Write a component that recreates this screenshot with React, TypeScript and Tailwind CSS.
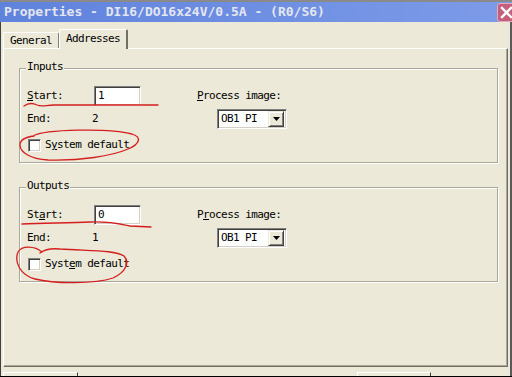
import React from "react";

const txt = "font-['DejaVu_Sans_Mono',monospace] text-[11px] tracking-[-0.6px] leading-[12px] text-black";

function Sunken({ className = "", children }: { className?: string; children?: React.ReactNode }) {
  return (
    <div
      className={
        "bg-white border border-t-[#808080] border-l-[#808080] border-b-white border-r-white shadow-[inset_1px_1px_0_#404040,inset_-1px_-1px_0_#d4d0c8] " +
        className
      }
    >
      {children}
    </div>
  );
}

function Combo() {
  return (
    <Sunken className="w-[70px] h-[20px] flex items-center pl-[3px] pr-[2px]">
      <span className={txt + " flex-1"}>OB1 PI</span>
      <div className="w-[16px] h-[16px] bg-[#ece9d8] border border-t-[#ece9d8] border-l-[#ece9d8] border-b-[#404040] border-r-[#404040] shadow-[inset_1px_1px_0_#fff,inset_-1px_-1px_0_#808080] flex items-center justify-center">
        <svg width="7" height="4" viewBox="0 0 7 4">
          <path d="M0 0 H7 L3.5 4 Z" fill="#000" />
        </svg>
      </div>
    </Sunken>
  );
}

function Group({
  title,
  value,
  end,
  startMn,
  procMn,
  sys,
}: {
  title: string;
  value: string;
  end: string;
  startMn: React.ReactNode;
  procMn: React.ReactNode;
  sys: React.ReactNode;
}) {
  return (
    <div className="relative w-[479px] h-[95px] border border-[#aca899] shadow-[inset_1px_1px_0_#fff,1px_1px_0_#fff] pt-[17px] pl-[7px]">
      <span className={txt + " absolute top-[-8px] left-[6px] px-[1px] bg-[#ece9d8]"}>{title}</span>
      <div className="grid grid-cols-[67px_103px_1fr] grid-rows-[20px_20px] gap-y-[3px] items-center">
        <span className={txt}>{startMn}</span>
        <Sunken className="w-[47px] h-[20px] flex items-center pl-[3px]">
          <span className={txt}>{value}</span>
        </Sunken>
        <span className={txt}>{procMn}</span>
        <span className={txt}>End:</span>
        <span className={txt + " -ml-[2px]"}>{end}</span>
        <div className="pl-[20px]">
          <Combo />
        </div>
      </div>
      <div className="mt-[8px] h-[16px] flex items-center pl-[1px] gap-[4px]">
        <Sunken className="w-[13px] h-[13px]" />
        <span className={txt}>{sys}</span>
      </div>
    </div>
  );
}

export default function App() {
  return (
    <div className="relative w-[512px] h-[377px] overflow-hidden bg-[#ece9d8] border-b border-black">
      {/* title bar */}
      <div className="h-[22px] border-t-2 border-[#8a8a8a] bg-gradient-to-r from-[#5f82dc] to-[#7d9be8] flex items-center overflow-hidden">
        <span className="pl-[4px] font-['DejaVu_Sans_Mono',monospace] font-bold text-[13px] leading-[16px] text-[#e4e6f0] whitespace-nowrap">
          Properties - DI16/DO16x24V/0.5A - (R0/S6)
        </span>
        <div className="ml-auto -mr-[6px] w-[21px] h-[19px] rounded-[3px] bg-[#c4607c] border border-[#e3a9b8] flex items-center pl-[2px]">
          <svg width="13" height="13" viewBox="0 0 13 13">
            <path d="M2 2 L11 11 M11 2 L2 11" stroke="#fff" strokeWidth="2.4" strokeLinecap="square" />
          </svg>
        </div>
      </div>

      {/* body */}
      <div className="h-[354px] border-l border-l-[#404040] border-r-2 border-r-[#5a5a5a] pl-[2px] pt-[7px]">
        {/* tabs */}
        <div className="flex items-end h-[19px]">
          <div className="w-[56px] h-[16px] border-t border-l border-white border-r border-r-[#808080] rounded-t-[2px] flex items-center justify-center">
            <span className={txt}>General</span>
          </div>
          <div className="relative z-10 w-[69px] h-[20px] -mb-[1px] bg-[#ece9d8] border-t border-l border-white border-r-2 border-r-[#716f64] rounded-t-[2px] flex items-start justify-center pt-[3px]">
            <span className={txt}>Addresses</span>
          </div>
        </div>
        {/* panel */}
        <div className="w-[505px] h-[319px] border border-t-white border-l-white border-r-[#716f64] border-b-[#716f64] shadow-[inset_-1px_-1px_0_#aca899] pt-[19px] pl-[15px] flex flex-col gap-[24px]">
          <Group
            title="Inputs"
            value="1"
            end="2"
            startMn={<><span className="underline">S</span>tart:</>}
            procMn={<><span className="underline">P</span>rocess image:</>}
            sys={<>S<span className="underline">y</span>stem default</>}
          />
          <Group
            title="Outputs"
            value="0"
            end="1"
            startMn={<>St<span className="underline">a</span>rt:</>}
            procMn={<>P<span className="underline">r</span>ocess image:</>}
            sys={<>Syst<span className="underline">e</span>m default</>}
          />
        </div>
        {/* bottom buttons (clipped) */}
        <div className="flex mt-[5px]">
          <div className="w-[75px] h-[10px] border-t border-l border-white border-r border-r-[#404040]" />
          <div className="ml-[279px] w-[74px] h-[10px] border-t border-l border-white border-r border-r-[#404040]" />
        </div>
      </div>

      {/* red hand annotations */}
      <svg className="absolute inset-0 pointer-events-none" width="512" height="377" viewBox="0 0 512 377" fill="none">
        <g stroke="#d41e1e" strokeWidth="1.3" strokeLinecap="round" strokeLinejoin="round">
          <path d="M24,106 C28,103 33,103 37,105 C42,107 46,105 54,105 L158,105" />
          <path d="M33,136 C45,129 110,128 132,134 C142,137 140,144 128,149 C112,156 80,161 48,160 C30,159 20,152 20,145 C20,140 26,137 34,136" />
          <path d="M22,224 C45,223 70,223 90,222 C110,221 120,224 130,226 L151,227" />
          <path d="M42,252 C35,246 22,245 18,252 C14,262 20,275 35,279 C55,284 95,284 113,278 C126,272 130,262 124,256 C115,250 90,251 60,249 C50,248 44,250 40,253" />
        </g>
      </svg>
    </div>
  );
}
